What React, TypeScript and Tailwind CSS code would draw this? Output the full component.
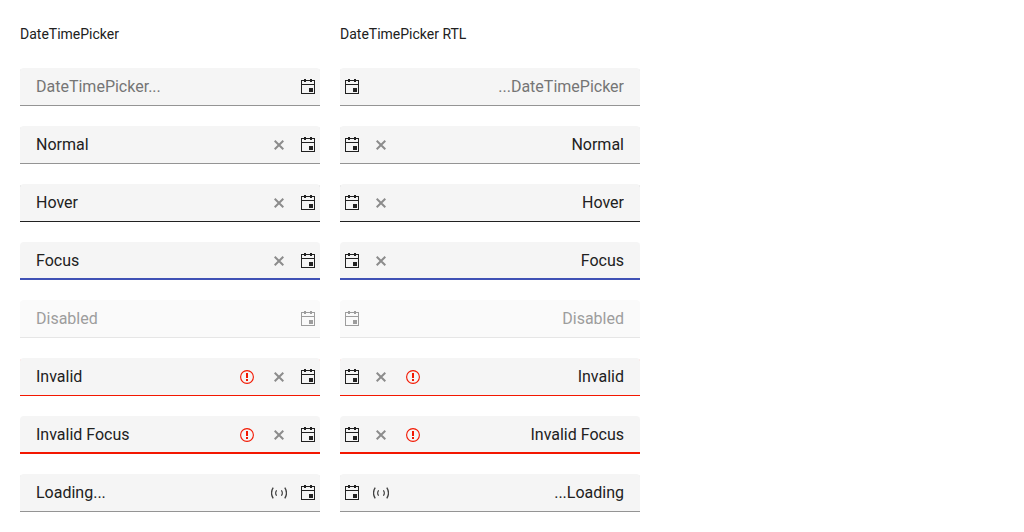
type State =
  | 'placeholder'
  | 'normal'
  | 'hover'
  | 'focus'
  | 'disabled'
  | 'invalid'
  | 'invalidFocus'
  | 'loading';

type Item = { state: State; value: string };

const items: Item[] = [
  { state: 'placeholder', value: '' },
  { state: 'normal', value: 'Normal' },
  { state: 'hover', value: 'Hover' },
  { state: 'focus', value: 'Focus' },
  { state: 'disabled', value: 'Disabled' },
  { state: 'invalid', value: 'Invalid' },
  { state: 'invalidFocus', value: 'Invalid Focus' },
  { state: 'loading', value: 'Loading...' },
];

const fieldStyles: Record<State, string> = {
  placeholder: 'bg-[#f5f5f5] shadow-[inset_0_-1px_#949494]',
  normal: 'bg-[#f5f5f5] shadow-[inset_0_-1px_#949494]',
  hover: 'bg-[#f5f5f5] shadow-[inset_0_-1px_#212121]',
  focus: 'bg-[#f5f5f5] shadow-[inset_0_-2px_#3f51b5]',
  disabled: 'bg-[#fafafa] shadow-[inset_0_-1px_#e6e6e6]',
  invalid: 'bg-[#f5f5f5] shadow-[inset_0_-1px_#f31700]',
  invalidFocus: 'bg-[#f5f5f5] shadow-[inset_0_-2px_#f31700]',
  loading: 'bg-[#f5f5f5] shadow-[inset_0_-1px_#949494]',
};

function CalendarIcon() {
  return (
    <svg width="14" height="15" viewBox="0 0 14 15" fill="currentColor" aria-hidden="true">
      <path
        fillRule="evenodd"
        d="M3 0h2v1h4V0h2v1h3v14H0V1h3V0ZM1 2v3h12V2h-2v1H9V2H5v1H3V2H1Zm0 4v8h12V6H1Z"
      />
      <path d="M8 9h4v4H8z" />
    </svg>
  );
}

function ClearIcon() {
  return (
    <svg width="10" height="10" viewBox="0 0 10 10" fill="none" stroke="currentColor" strokeWidth="2" aria-hidden="true">
      <path d="M.7.7l8.6 8.6M9.3.7L.7 9.3" />
    </svg>
  );
}

function InvalidIcon() {
  return (
    <svg width="14" height="14" viewBox="0 0 14 14" aria-hidden="true">
      <circle cx="7" cy="7" r="6.4" fill="none" stroke="currentColor" strokeWidth="1.1" />
      <path d="M6 3h2v5H6zM6 9h2v2H6z" fill="currentColor" />
    </svg>
  );
}

function LoadingIcon() {
  return (
    <svg width="16" height="12" viewBox="0 0 16 12" fill="none" stroke="currentColor" aria-hidden="true">
      <path d="M2.2.7C.2 3.8.2 8.2 2.2 11.3M13.8.7c2 3.1 2 7.5 0 10.6" strokeWidth="1.3" />
      <path d="M5.6 3.2c-1.2 1.7-1.2 3.9 0 5.6M10.4 3.2c1.2 1.7 1.2 3.9 0 5.6" strokeWidth="1.1" />
    </svg>
  );
}

function DateTimePicker({ state, value }: Item) {
  const disabled = state === 'disabled';
  const invalid = state === 'invalid' || state === 'invalidFocus';
  const clearable = invalid || state === 'normal' || state === 'hover' || state === 'focus';

  return (
    <div className={`flex h-[38px] items-center rounded-t ${fieldStyles[state]}`}>
      <input
        type="text"
        defaultValue={value}
        placeholder="DateTimePicker..."
        aria-label={value || 'DateTimePicker'}
        aria-invalid={invalid}
        disabled={disabled}
        className="h-full min-w-0 flex-1 bg-transparent ps-4 pb-0.5 text-base text-[#212121] outline-none placeholder:text-[#757575] placeholder:opacity-100 disabled:text-[#9d9d9d]"
      />
      {invalid && (
        <span className="flex w-8 justify-center text-[#f31700]">
          <InvalidIcon />
        </span>
      )}
      {clearable && (
        <button type="button" aria-label="Clear" className="flex h-full w-8 items-center justify-center text-[#8c8c8c]">
          <ClearIcon />
        </button>
      )}
      {state === 'loading' && (
        <span className="flex w-8 justify-center text-[#424242]">
          <LoadingIcon />
        </span>
      )}
      <button
        type="button"
        aria-label="Open calendar"
        disabled={disabled}
        className="ms-px flex h-full w-6 items-center justify-center pb-px text-[#212121] disabled:text-[#9d9d9d]"
      >
        <CalendarIcon />
      </button>
    </div>
  );
}

function Column({ title, rtl = false }: { title: string; rtl?: boolean }) {
  return (
    <section className="w-full max-w-[300px]">
      <h2 className="mb-6 text-sm leading-5 text-[#212121]">{title}</h2>
      <div dir={rtl ? 'rtl' : 'ltr'} className="flex flex-col gap-5">
        {items.map((item) => (
          <DateTimePicker key={item.state} {...item} />
        ))}
      </div>
    </section>
  );
}

export default function App() {
  return (
    <main className="flex gap-5 bg-white px-5 pt-6 pb-5 font-[Roboto,sans-serif]">
      <Column title="DateTimePicker" />
      <Column title="DateTimePicker RTL" rtl />
    </main>
  );
}
